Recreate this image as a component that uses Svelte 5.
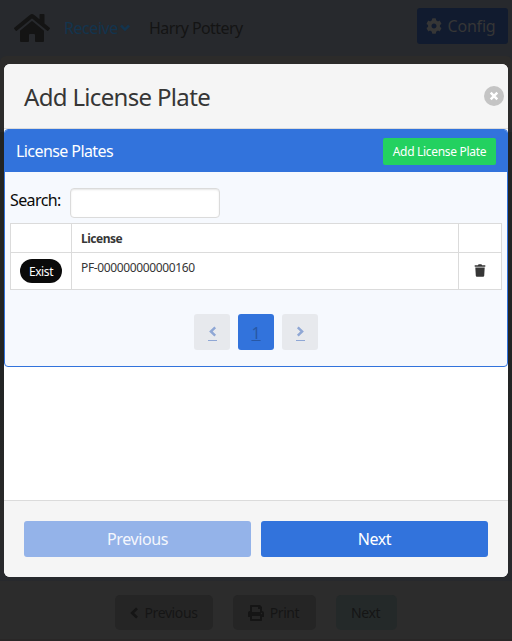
<script>
  const rows = [{ status: 'Exist', license: 'PF-000000000000160' }];
  let search = $state('');
</script>

{#snippet chevron(dir)}
  <svg class="chev {dir}" viewBox="0 0 10 12"><path d="M8 1.4 3.200 6 8 10.600" fill="none" stroke="currentColor" stroke-width="2.700" /></svg>
{/snippet}

<div class="page">
  <nav>
    <svg class="home" viewBox="0 0 576 512"><path fill="currentColor" d="M280.4 148.3 96 300.1V464a16 16 0 0 0 16 16l112.1-.3a16 16 0 0 0 15.9-16V368a16 16 0 0 1 16-16h64a16 16 0 0 1 16 16v95.6a16 16 0 0 0 16 16.1L464 480a16 16 0 0 0 16-16V300L295.7 148.3a12.2 12.2 0 0 0-15.3 0zM571.6 251.5 488 182.6V44a12 12 0 0 0-12-12h-56a12 12 0 0 0-12 12v72.6l-89.5-73.7a48 48 0 0 0-61 0L4.3 251.5a12 12 0 0 0-1.6 16.9l25.5 31a12 12 0 0 0 16.9 1.6l235.2-193.7a12.2 12.2 0 0 1 15.3 0L530.9 301a12 12 0 0 0 16.9-1.6l25.5-31a12 12 0 0 0-1.7-16.9z" /></svg>
    <span class="receive">Receive</span>
    <svg class="down" viewBox="0 0 10 8"><path d="M.9 1.500 5 5.600l4.100-4.100" fill="none" stroke="currentColor" stroke-width="2.500" /></svg>
    <span class="user">Harry Pottery</span>
    <button class="config">
      <svg viewBox="0 0 512 512"><path fill="currentColor" d="M487.4 315.7l-42.6-24.6c4.3-23.2 4.3-47 0-70.2l42.6-24.6c4.9-2.8 7.1-8.6 5.5-14-11.1-35.6-30-67.8-54.7-94.6-3.8-4.1-10-5.1-14.8-2.3L380.8 110c-17.9-15.4-38.5-27.3-60.8-35.1V25.8c0-5.6-3.9-10.5-9.4-11.7-36.7-8.2-74.3-7.8-109.2 0-5.5 1.2-9.4 6.1-9.4 11.7V75c-22.2 7.9-42.8 19.8-60.8 35.1L88.7 85.5c-4.9-2.8-11-1.9-14.8 2.3-24.7 26.7-43.6 58.9-54.7 94.6-1.7 5.4.6 11.2 5.5 14L67.3 221c-4.3 23.2-4.3 47 0 70.2l-42.6 24.6c-4.9 2.8-7.1 8.6-5.5 14 11.1 35.6 30 67.8 54.7 94.6 3.8 4.1 10 5.1 14.8 2.3l42.6-24.6c17.9 15.4 38.5 27.3 60.8 35.1v49.2c0 5.6 3.9 10.5 9.4 11.7 36.7 8.2 74.3 7.8 109.2 0 5.5-1.2 9.4-6.1 9.4-11.7v-49.2c22.2-7.9 42.8-19.8 60.8-35.1l42.6 24.6c4.9 2.8 11 1.9 14.8-2.3 24.7-26.7 43.6-58.9 54.7-94.6 1.5-5.5-.7-11.3-5.6-14.1zM256 336c-44.1 0-80-35.900-80-80s35.900-80 80-80 80 35.900 80 80-35.900 80-80 80z" /></svg>
      <span>Config</span>
    </button>
  </nav>
  <div class="band top"></div>
  <div class="band middle"></div>
  <div class="actions">
    <button class="back">{@render chevron('left')}<span>Previous</span></button>
    <button class="print">
      <svg viewBox="0 0 512 512"><path fill="currentColor" d="M448 192V77.3c0-8.5-3.4-16.6-9.4-22.6L393.4 9.4c-6-6-14.1-9.4-22.6-9.4H96C78.3 0 64 14.3 64 32v160c-35.3 0-64 28.7-64 64v112c0 8.8 7.2 16 16 16h48v96c0 17.7 14.3 32 32 32h320c17.7 0 32-14.3 32-32v-96h48c8.8 0 16-7.2 16-16V256c0-35.3-28.7-64-64-64zm-64 256H128v-96h256v96zm0-224H128V64h192v48c0 8.8 7.2 16 16 16h48v96zm48 72c-13.3 0-24-10.7-24-24s10.7-24 24-24 24 10.7 24 24-10.7 24-24 24z" /></svg>
      <span>Print</span>
    </button>
    <button class="forward"><span>Next</span></button>
  </div>
</div>

<div class="modal">
  <header>
    <h1>Add License Plate</h1>
    <button class="close" aria-label="Close"><svg viewBox="0 0 20 20"><path d="m6.700 6.700 6.600 6.600m0-6.600-6.600 6.600" stroke="#fff" stroke-width="2.500" /></svg></button>
  </header>
  <section>
    <div class="panel">
      <div class="heading">
        <span class="ptitle">License Plates</span>
        <button class="add"><span>Add License Plate</span></button>
      </div>
      <div class="body">
        <div class="search"><label for="search">Search:</label><input id="search" bind:value={search} /></div>
        <table>
          <thead><tr><th></th><th><span>License</span></th><th></th></tr></thead>
          <tbody>
            {#each rows as row}
              <tr>
                <td class="st"><span class="tag"><span>{row.status}</span></span></td>
                <td class="lic"><span>{row.license}</span></td>
                <td class="del"><svg viewBox="0 0 12 13"><path fill="currentColor" d="M.7 1.200h3.200L4.600.3h2.800l.7.900h3.200v1.600H.7zM1.300 3.400h9.400l-.5 8.400q-.1 1-1.100 1H2.900q-1 0-1.100-1z" /></svg></td>
              </tr>
            {/each}
          </tbody>
        </table>
        <div class="pages">
          <button class="pg" aria-label="Previous page">{@render chevron('left')}</button>
          <button class="pg current">1</button>
          <button class="pg" aria-label="Next page">{@render chevron('right')}</button>
        </div>
      </div>
    </div>
  </section>
  <footer>
    <button class="prev"><span>Previous</span></button>
    <button class="next"><span>Next</span></button>
  </footer>
</div>

<style>
  :global(body) { margin: 0; overflow: hidden; background: #2c2c2c; }
  .page, .modal { font-family: "Noto Sans", "Open Sans", sans-serif; font-size: 16px; letter-spacing: -.5px; }
  .page *, .modal, .modal * { box-sizing: border-box; }
  button { font: inherit; letter-spacing: inherit; border: 0; padding: 0; display: flex; align-items: center; justify-content: center; white-space: nowrap; }
  svg { display: block; flex: none; }
  .page { width: 512px; height: 641px; display: flex; flex-direction: column; background: #27292d; }
  nav { height: 56px; background: #27292d; display: flex; align-items: center; padding: 0 4px 4px 14px; }
  .home { width: 36px; height: 32px; color: #141414; margin-top: 4px; }
  .receive { width: 53px; color: #13344e; margin-left: 14px; letter-spacing: -.45px; margin-top: 4px; white-space: nowrap; }
  .down { width: 10px; height: 8px; color: #13344e; margin: 4px 0 0 3px; }
  .user { color: #141414; margin: 4px 0 0 19px; letter-spacing: -.58px; white-space: nowrap; }
  .config { margin-left: auto; width: 91px; height: 36px; border-radius: 3px; background: #111b2f; color: #363636; gap: 6px; letter-spacing: -.2px; padding-right: 4px; }
  .config svg { width: 16px; height: 16px; }
  .band.top { height: 76px; background: #2c2b2a; border-radius: 6px; }
  .band.middle { height: 449px; background: linear-gradient(#222424, #222424 55%, #292929 85%, #27292d); }
  .actions { flex: 1; display: flex; align-items: flex-start; gap: 20px; padding: 14px 0 0 115px; font-size: 14px; background: #2c2c2c; border-bottom: 2px solid #292727; letter-spacing: -.4px; }
  .actions button { height: 35px; border-radius: 5px; background: #252525; color: #151515; gap: 6px; padding-right: 2px; }
  .back { width: 98px; } .print { width: 83px; } .actions .forward { width: 61px; background: #242929; }
  .print svg { width: 16px; height: 16px; }
  .modal { position: absolute; left: 4px; top: 64px; width: 504px; height: 513px; border-radius: 6px; overflow: hidden; background: #fff; display: flex; flex-direction: column; }
  header { height: 65px; background: #f5f5f5; border-bottom: 1px solid #dbdbdb; display: flex; align-items: center; padding: 2px 4px 0 20px; justify-content: space-between; }
  h1 { margin: 0; font-size: 24px; font-weight: 400; color: #363636; line-height: 1; letter-spacing: -.67px; }
  .close { width: 20px; height: 20px; border-radius: 50%; background: #c4c4c4; margin-top: -2px; }
  .close svg { width: 20px; height: 20px; }
  section { flex: 1; }
  .panel { height: 238px; border: 1px solid #3273dc; border-radius: 4px; background: #f6f9fe; overflow: hidden; }
  .heading { height: 42px; background: #3273dc; color: #fff; display: flex; align-items: center; justify-content: space-between; padding: 0 11px; letter-spacing: -.58px; }
  .add { width: 113px; height: 27px; border-radius: 2px; background: #23d160; color: #fff; font-size: 12px; letter-spacing: -.3px; }
  .body { padding: 16px 5px; }
  .search { display: flex; height: 30px; align-items: center; color: #0a0a0a; margin-bottom: 5px; letter-spacing: -.6px; }
  .search label { width: 60px; white-space: nowrap; line-height: 20px; margin-top: -6px; }
  input { width: 150px; height: 30px; border: 1px solid #dbdbdb; border-radius: 4px; background: #fff; box-shadow: inset 0 1px 2px rgba(10,10,10,.1); outline: 0; }
  table { width: 492px; border-collapse: separate; border-spacing: 0; border: solid #dbdbdb; border-width: 1px 0 0 1px; table-layout: fixed; background: #fff; font-size: 12px; color: #363636; letter-spacing: 0; }
  th, td { border: solid #dbdbdb; border-width: 0 1px 1px 0; padding: 0 9px; text-align: left; line-height: 16px; }
  th { height: 29px; padding-top: 2px; }
  th span { letter-spacing: -.5px; }
  td { height: 37px; vertical-align: top; }
  th:first-child { width: 61px; } th:last-child { width: 43px; }
  .st { padding: 6px 0 0 9px; }
  .tag { display: flex; align-items: center; justify-content: center; width: 42px; height: 24px; border-radius: 12px; background: #0a0a0a; color: #fff; letter-spacing: -.4px; padding-top: 1px; }
  .lic { padding-top: 7px; letter-spacing: -.36px; }
  .del { padding: 11px 0 0 15px; }
  .del svg { width: 12px; height: 13px; }
  .pages { display: flex; justify-content: center; gap: 8px; margin-top: 24px; }
  .pg { width: 36px; height: 36px; border-radius: 3px; background: #e7e9ed; color: #8fa7d5; }
  .current { background: #3273dc; color: #2858a5; text-decoration: underline; letter-spacing: 0; padding-top: 1px; }
  .chev { width: 10px; height: 12px; }
  .pg .chev { width: 9px; height: 15px; padding-bottom: 3px; margin-top: 3px; border-bottom: 1px solid #8fa7d5; }
  .right { transform: scaleX(-1); }
  footer { height: 77px; background: #f5f5f5; border-top: 1px solid #dbdbdb; padding: 20px; display: flex; gap: 10px; letter-spacing: -.42px; }
  footer button { flex: 1; height: 36px; border-radius: 3px; background: #3273dc; color: #fff; }
  .prev { background: #94b3e9; color: #f4f7fd; }
</style>
